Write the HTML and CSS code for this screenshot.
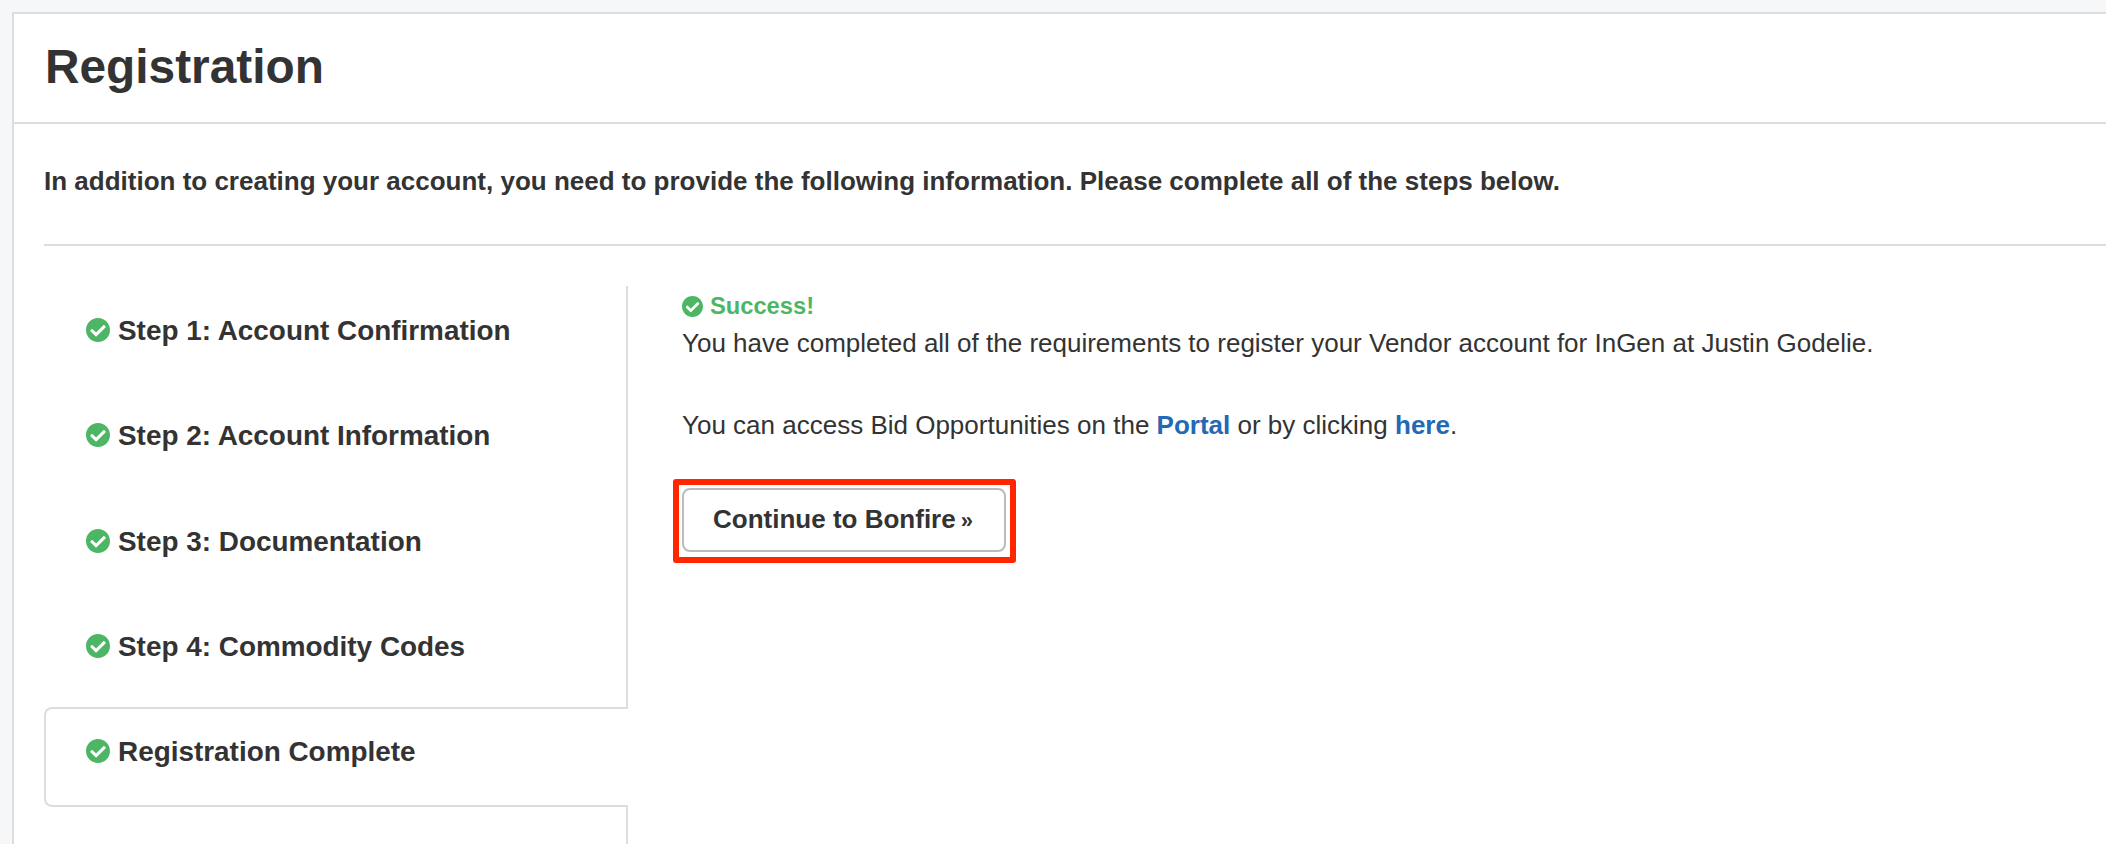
FILE: index.html
```
<!DOCTYPE html>
<html lang="en">
<head>
<meta charset="utf-8">
<title>Registration</title>
<link rel="stylesheet" href="styles.css">
</head>
<body>
<svg class="defs" width="0" height="0" aria-hidden="true">
  <symbol id="check" viewBox="8 8 496 496">
    <path d="M504 256c0 136.967-111.033 248-248 248S8 392.967 8 256 119.033 8 256 8s248 111.033 248 248zM227.314 387.314l184-184c6.248-6.248 6.248-16.379 0-22.627l-22.627-22.627c-6.248-6.249-16.379-6.249-22.628 0L216 308.118l-70.059-70.059c-6.248-6.248-16.379-6.248-22.628 0l-22.627 22.627c-6.248 6.248-6.248 16.379 0 22.627l104 104c6.249 6.25 16.379 6.25 22.628.001z"/>
  </symbol>
</svg>
<main class="panel">
  <header class="panel-head">
    <h1 class="title">Registration</h1>
  </header>
  <div class="panel-body">
    <p class="intro">In addition to creating your account, you need to provide the following information. Please complete all of the steps below.</p>
    <div class="wizard">
      <nav class="tabs">
        <a class="tab"><svg class="tab-icon"><use href="#check"/></svg>Step 1: Account Confirmation</a>
        <a class="tab"><svg class="tab-icon"><use href="#check"/></svg>Step 2: Account Information</a>
        <a class="tab"><svg class="tab-icon"><use href="#check"/></svg>Step 3: Documentation</a>
        <a class="tab"><svg class="tab-icon"><use href="#check"/></svg>Step 4: Commodity Codes</a>
        <a class="tab tab-active"><svg class="tab-icon"><use href="#check"/></svg>Registration Complete</a>
      </nav>
      <section class="content">
        <div class="success"><svg class="success-icon"><use href="#check"/></svg>Success!</div>
        <p class="line">You have completed all of the requirements to register your Vendor account for InGen at Justin Godelie.</p>
        <p class="line line-access">You can access Bid Opportunities on the <a class="link">Portal</a> or by clicking <a class="link">here</a>.</p>
        <div class="highlight">
          <button class="btn">Continue to Bonfire<span class="raquo">»</span></button>
        </div>
      </section>
    </div>
  </div>
</main>
</body>
</html>
```

FILE: styles.css
```
* {
  box-sizing: border-box;
}

html,
body {
  height: 844px;
  overflow: hidden;
}

body {
  margin: 0;
  padding: 12px 0 0 12px;
  background: #f5f7f9;
  color: #333;
  font-family: "Liberation Sans", Arial, sans-serif;
}

.defs {
  position: absolute;
}

.panel {
  height: 900px;
  background: #fff;
  border: solid #ddd;
  border-width: 2px 0 0 2px;
}

.panel-head {
  height: 110px;
  padding: 0 0 3px 31px;
  border-bottom: 2px solid #ddd;
  display: flex;
  align-items: center;
}

.title {
  margin: 0;
  font-size: 47.8px;
  font-weight: 700;
  line-height: 1;
}

.panel-body {
  padding: 0 0 0 30px;
}

.intro {
  margin: 0;
  height: 122px;
  padding-top: 42px;
  font-size: 26px;
  line-height: 30px;
  font-weight: 700;
  border-bottom: 2px solid #ddd;
}

.wizard {
  display: flex;
  margin-top: 40px;
}

.tabs {
  width: 584px;
  height: 600px;
  border-right: 2px solid #ddd;
  display: flex;
  flex-direction: column;
  gap: 5.25px;
  flex: none;
}

.tab {
  height: 100px;
  padding: 24px 0 0 40px;
  font-size: 27.9px;
  line-height: 38px;
  font-weight: 700;
  display: flex;
  align-items: flex-start;
  border: 2px solid transparent;
  border-right: 0;
}

.tab-active {
  margin-right: -2px;
  background: #fff;
  border-color: #ddd;
  border-radius: 8px 0 0 8px;
}

.tab-icon {
  width: 24px;
  height: 24px;
  margin: 6px 8px 0 0;
  fill: #4cb664;
  flex: none;
}

.content {
  padding: 5px 0 0 54px;
  font-size: 26px;
  min-width: 0;
}

.success {
  display: flex;
  align-items: center;
  height: 30px;
  color: #4cb664;
  font-size: 23.7px;
  font-weight: 700;
  white-space: nowrap;
}

.success-icon {
  width: 21px;
  height: 21px;
  margin-right: 7px;
  fill: #4cb664;
  flex: none;
}

.line {
  margin: 7px 0 0;
  line-height: 30px;
  white-space: nowrap;
}

.line-access {
  margin-top: 52px;
}

.link {
  color: #2369b3;
  font-weight: 700;
}

.highlight {
  display: inline-flex;
  margin: 39px 0 0 -9px;
  padding: 3px 4px 5px 3px;
  border: 6px solid #ff2600;
  border-radius: 3px;
}

.btn {
  width: 324px;
  height: 64px;
  padding: 0 2px 2px 0;
  background: #fff;
  border: 2px solid #bbb;
  border-radius: 8px;
  color: #333;
  font: 700 26px "Liberation Sans", Arial, sans-serif;
}

.raquo {
  margin-left: 5px;
  font-size: 22px;
}
```
